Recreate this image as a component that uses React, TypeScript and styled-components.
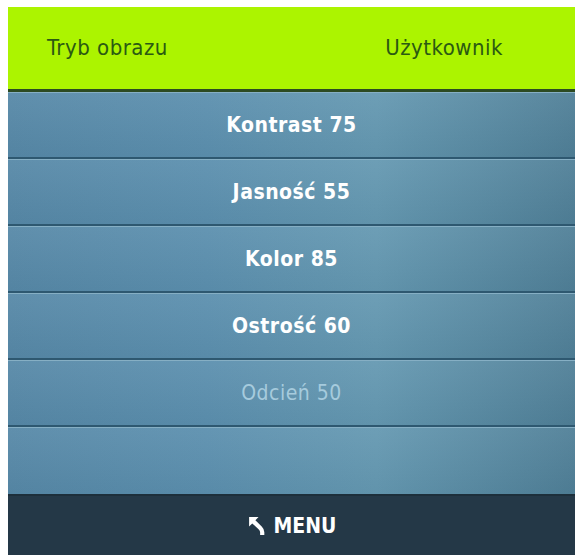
import styled, { createGlobalStyle } from "styled-components";

const GlobalStyle = createGlobalStyle`
  html, body {
    margin: 0;
    padding: 0;
    background: #ffffff;
  }
  body {
    font-family: "DejaVu Sans Condensed", "DejaVu Sans", sans-serif;
  }
`;

const Components = {
  Page: styled.div`
    padding: 7px 9px 3px 8px;
  `,
  Panel: styled.div`
    display: flex;
    flex-direction: column;
    background: linear-gradient(90deg, #5688a7 0%, #5b8fae 35%, #6498b1 65%, #4f7f97 100%);
  `,
  Header: styled.div`
    height: 80px;
    display: flex;
    align-items: center;
    justify-content: space-between;
    padding: 0 72px 2px 39px;
    background: #acf400;
    border-bottom: 3px solid #2c4a22;
  `,
  HeaderText: styled.span`
    color: #2b5a12;
    font-size: 22px;
    letter-spacing: 0.5px;
  `,
  Row: styled.div<{ $last?: boolean }>`
    height: ${(p) => (p.$last ? 66 : 64)}px;
    display: flex;
    align-items: center;
    justify-content: center;
    border-top: 1px solid #86afc4;
    border-bottom: ${(p) => (p.$last ? "none" : "2px solid #2e5870")};
    background: linear-gradient(180deg, rgba(255, 255, 255, 0.06), rgba(0, 0, 0, 0.03));
  `,
  RowText: styled.span<{ $dim?: boolean }>`
    color: ${(p) => (p.$dim ? "#a6cbdd" : "#ffffff")};
    font-size: 21px;
    font-weight: ${(p) => (p.$dim ? 400 : 700)};
    letter-spacing: 0.5px;
  `,
  Footer: styled.div`
    height: 59px;
    display: flex;
    align-items: center;
    justify-content: center;
    gap: 6px;
    background: #243847;
    border-top: 2px solid #1d2f3b;
  `,
  FooterText: styled.span`
    color: #ffffff;
    font-size: 21px;
    font-weight: 700;
  `,
};

const items = [
  { label: "Kontrast", value: 75 },
  { label: "Jasność", value: 55 },
  { label: "Kolor", value: 85 },
  { label: "Ostrość", value: 60 },
  { label: "Odcień", value: 50, dim: true },
];

const BackIcon = () => (
  <svg width="21" height="21" viewBox="0 0 20 20">
    <path
      d="M2 2 L11 2 L8 5 L14 11 Q16.5 13.5 16.5 16.5 L16.5 19 L12.5 19 L12.5 16.5 Q12.5 15 11 13.5 L5 8 L2 11 Z"
      fill="#ffffff"
    />
  </svg>
);

export default function App() {
  return (
    <>
      <GlobalStyle />
      <Components.Page>
        <Components.Panel>
          <Components.Header>
            <Components.HeaderText>Tryb obrazu</Components.HeaderText>
            <Components.HeaderText>Użytkownik</Components.HeaderText>
          </Components.Header>
          {items.map((item) => (
            <Components.Row key={item.label}>
              <Components.RowText $dim={item.dim}>
                {item.label} {item.value}
              </Components.RowText>
            </Components.Row>
          ))}
          <Components.Row $last />
          <Components.Footer>
            <BackIcon />
            <Components.FooterText>MENU</Components.FooterText>
          </Components.Footer>
        </Components.Panel>
      </Components.Page>
    </>
  );
}
